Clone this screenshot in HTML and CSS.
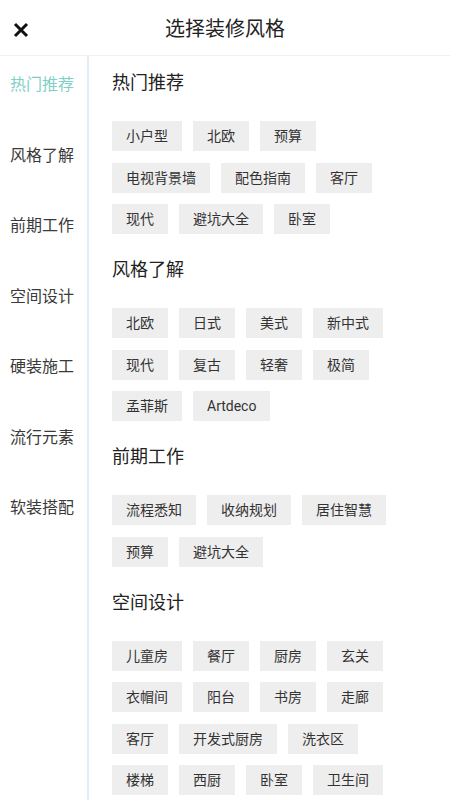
FILE: index.html
```html
<!DOCTYPE html>
<html lang="zh-CN">
<head>
<meta charset="utf-8">
<title>选择装修风格</title>
<link rel="stylesheet" href="styles.css">
</head>
<body>
<div class="page">
  <header class="header">
    <span class="close" aria-label="关闭">
      <svg width="16" height="16" viewBox="0 0 16 16"><path d="M2 2 L14 14 M14 2 L2 14" stroke="#111" stroke-width="3" stroke-linecap="butt" fill="none"/></svg>
    </span>
    <h1 class="title">选择装修风格</h1>
  </header>
  <div class="main">
    <nav class="sidebar">
      <div class="nav-item active">热门推荐</div>
      <div class="nav-item">风格了解</div>
      <div class="nav-item">前期工作</div>
      <div class="nav-item">空间设计</div>
      <div class="nav-item">硬装施工</div>
      <div class="nav-item">流行元素</div>
      <div class="nav-item">软装搭配</div>
    </nav>
    <section class="content">
      <div class="group">
        <h2 class="group-title">热门推荐</h2>
        <div class="tags">
          <span class="tag">小户型</span><span class="tag">北欧</span><span class="tag">预算</span>
          <span class="tag">电视背景墙</span><span class="tag">配色指南</span><span class="tag">客厅</span>
          <span class="tag">现代</span><span class="tag">避坑大全</span><span class="tag">卧室</span>
        </div>
      </div>
      <div class="group">
        <h2 class="group-title">风格了解</h2>
        <div class="tags">
          <span class="tag">北欧</span><span class="tag">日式</span><span class="tag">美式</span><span class="tag">新中式</span>
          <span class="tag">现代</span><span class="tag">复古</span><span class="tag">轻奢</span><span class="tag">极简</span>
          <span class="tag">孟菲斯</span><span class="tag">Artdeco</span>
        </div>
      </div>
      <div class="group">
        <h2 class="group-title">前期工作</h2>
        <div class="tags">
          <span class="tag">流程悉知</span><span class="tag">收纳规划</span><span class="tag">居住智慧</span>
          <span class="tag">预算</span><span class="tag">避坑大全</span>
        </div>
      </div>
      <div class="group">
        <h2 class="group-title">空间设计</h2>
        <div class="tags">
          <span class="tag">儿童房</span><span class="tag">餐厅</span><span class="tag">厨房</span><span class="tag">玄关</span>
          <span class="tag">衣帽间</span><span class="tag">阳台</span><span class="tag">书房</span><span class="tag">走廊</span>
          <span class="tag">客厅</span><span class="tag">开发式厨房</span><span class="tag">洗衣区</span>
          <span class="tag">楼梯</span><span class="tag">西厨</span><span class="tag">卧室</span><span class="tag">卫生间</span>
        </div>
      </div>
    </section>
  </div>
</div>
</body>
</html>
```
FILE: styles.css
```css
* { box-sizing: border-box; }
html, body {
  margin: 0;
  padding: 0;
  background: #fff;
  font-family: Roboto, "Noto Sans CJK SC", sans-serif;
  color: #222;
}
body { height: 800px; overflow: hidden; }
.page { display: flex; flex-direction: column; height: 800px; }
.header {
  position: relative;
  height: 56px;
  border-bottom: 1px solid #efefef;
  display: flex;
  align-items: center;
  justify-content: center;
  flex-shrink: 0;
}
.close {
  position: absolute;
  left: 13px;
  top: 22px;
  width: 16px;
  height: 16px;
  display: block;
}
.close svg { display: block; }
.title {
  margin: 0;
  font-size: 20px;
  font-weight: 400;
  line-height: 28px;
  color: #222;
  padding-top: 2px;
}
.main { display: flex; flex: 1; min-height: 0; }
.sidebar {
  width: 89px;
  flex-shrink: 0;
  border-right: 2px solid #e3edf3;
  padding-top: 17px;
  display: flex;
  flex-direction: column;
  align-items: center;
  gap: 46.5px;
}
.nav-item {
  font-size: 16px;
  line-height: 24px;
  color: #3a3a3a;
  padding-right: 3px;
}
.nav-item.active { color: #7fcfc7; }
.content {
  flex: 1;
  padding: 15px 40px 0 23px;
  display: flex;
  flex-direction: column;
  gap: 24px;
}
.group-title {
  margin: 0 0 26px;
  font-size: 18px;
  font-weight: 400;
  line-height: 24px;
  color: #222;
}
.tags {
  display: flex;
  flex-wrap: wrap;
  gap: 11.5px 11px;
}
.tag {
  height: 30px;
  line-height: 30px;
  padding: 0 14px;
  background: #efeeef;
  font-size: 14px;
  color: #333;
  white-space: nowrap;
}
```
